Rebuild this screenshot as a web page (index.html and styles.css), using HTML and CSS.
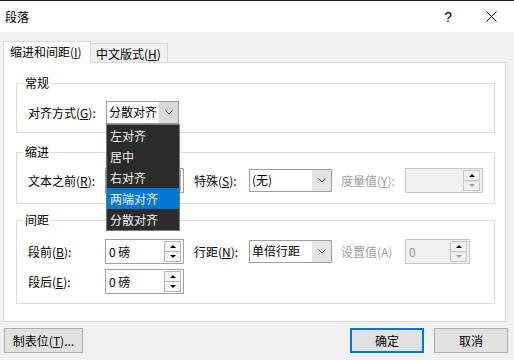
FILE: index.html
```html
<!DOCTYPE html>
<html lang="zh-CN">
<head>
    <meta charset="UTF-8">
    <title>段落</title>
    <link rel="stylesheet" href="styles.css">
</head>
<body>
    <div class="top-strip"></div>
    <div class="title-bar">
        <span class="title">段落</span>
        <span class="help">?</span>
        <span class="close">
            <svg width="11" height="11" viewBox="0 0 11 11"><path d="M0.5 0.5L10.5 10.5M10.5 0.5L0.5 10.5" stroke="#000" stroke-width="1"/></svg>
        </span>
    </div>

    <div class="tabs">
        <div class="tab active">缩进和间距(<u>I</u>)</div>
        <div class="tab">中文版式(<u>H</u>)</div>
    </div>

    <div class="panel">
        <fieldset class="group group-general">
            <legend>常规</legend>
            <div class="row">
                <span class="lbl lbl-first">对齐方式(<u>G</u>):</span>
                <div class="select select-align open">
                    <span class="value">分散对齐</span>
                    <span class="drop-btn">
                        <svg width="8" height="5" viewBox="0 0 8 5"><path d="M0.5 0.5L4 4L7.5 0.5" fill="none" stroke="#555"/></svg>
                    </span>
                    <ul class="drop-list">
                        <li>左对齐</li>
                        <li>居中</li>
                        <li>右对齐</li>
                        <li class="selected">两端对齐</li>
                        <li>分散对齐</li>
                    </ul>
                </div>
            </div>
        </fieldset>

        <fieldset class="group group-indent">
            <legend>缩进</legend>
            <div class="row">
                <span class="lbl lbl-first">文本之前(<u>R</u>):</span>
                <!-- covered by the open list above -->
                <div class="spin">
                    <span class="value"></span>
                    <span class="spin-btns">
                        <span class="spin-btn"><i class="arrow-up"></i></span>
                        <span class="spin-btn"><i class="arrow-down"></i></span>
                    </span>
                </div>
                <span class="lbl lbl-mid">特殊(<u>S</u>):</span>
                <div class="select select-mid">
                    <span class="value">(无)</span>
                    <span class="drop-btn">
                        <svg width="8" height="5" viewBox="0 0 8 5"><path d="M0.5 0.5L4 4L7.5 0.5" fill="none" stroke="#555"/></svg>
                    </span>
                </div>
                <span class="lbl lbl-last disabled">度量值(<u>Y</u>):</span>
                <div class="spin disabled spin-wide">
                    <span class="value"></span>
                    <span class="spin-btns">
                        <span class="spin-btn"><i class="arrow-up"></i></span>
                        <span class="spin-btn"><i class="arrow-down"></i></span>
                    </span>
                </div>
            </div>
        </fieldset>

        <fieldset class="group group-spacing">
            <legend>间距</legend>
            <div class="row">
                <span class="lbl lbl-first">段前(<u>B</u>):</span>
                <div class="spin">
                    <span class="value">0 磅</span>
                    <span class="spin-btns">
                        <span class="spin-btn"><i class="arrow-up"></i></span>
                        <span class="spin-btn"><i class="arrow-down"></i></span>
                    </span>
                </div>
                <span class="lbl lbl-mid">行距(<u>N</u>):</span>
                <div class="select select-mid">
                    <span class="value">单倍行距</span>
                    <span class="drop-btn">
                        <svg width="8" height="5" viewBox="0 0 8 5"><path d="M0.5 0.5L4 4L7.5 0.5" fill="none" stroke="#555"/></svg>
                    </span>
                </div>
                <span class="lbl lbl-last disabled">设置值(A)</span>
                <div class="spin disabled spin-short">
                    <span class="value">0</span>
                    <span class="spin-btns">
                        <span class="spin-btn"><i class="arrow-up"></i></span>
                        <span class="spin-btn"><i class="arrow-down"></i></span>
                    </span>
                </div>
            </div>
            <div class="row">
                <span class="lbl lbl-first">段后(<u>E</u>):</span>
                <div class="spin">
                    <span class="value">0 磅</span>
                    <span class="spin-btns">
                        <span class="spin-btn"><i class="arrow-up"></i></span>
                        <span class="spin-btn"><i class="arrow-down"></i></span>
                    </span>
                </div>
            </div>
        </fieldset>
    </div>

    <div class="buttons">
        <button class="btn btn-tabs">制表位(<u>T</u>)...</button>
        <button class="btn btn-ok">确定</button>
        <button class="btn">取消</button>
    </div>
</body>
</html>
```

FILE: styles.css
```css
body {
    margin: 0;
    width: 514px;
    height: 360px;
    overflow: hidden;
    background-color: #f0f0f0;
    font-family: "Noto Sans CJK SC", sans-serif;
    font-size: 12px;
    line-height: 16px;
    color: #000;
}

u {
    text-decoration: underline;
    text-underline-offset: 1px;
}

.top-strip {
    height: 1px;
    background-color: #1e1e1e;
}

.title-bar {
    height: 31px;
    background-color: #fff;
    display: flex;
    align-items: center;
    padding: 0 17px 0 5px;
}

.help {
    margin-left: auto;
    font-family: "Liberation Sans", sans-serif;
    font-size: 14px;
}

.close {
    display: flex;
    margin-left: 34px;
}

/* tabs */
.tabs {
    display: flex;
    align-items: flex-end;
    height: 21px;
    margin: 9px 0 0 3px;
}

.tab {
    box-sizing: border-box;
    height: 19px;
    width: 77px;
    padding: 2px 0 0 5px;
    border: 1px solid #d9d9d9;
    border-left: none;
    border-bottom: none;
    white-space: nowrap;
}

.tab.active {
    position: relative;
    z-index: 1;
    width: 88px;
    height: 22px;
    margin-bottom: -1px;
    padding: 2px 0 0 6px;
    border-left: 1px solid #d9d9d9;
    background-color: #fff;
}

.panel {
    box-sizing: border-box;
    width: 503px;
    height: 260px;
    margin-left: 3px;
    padding: 12px 0 0 12px;
    background-color: #fff;
    border: 1px solid #d9d9d9;
}

/* group boxes */
.group {
    box-sizing: border-box;
    width: 479px;
    margin: 0;
    padding: 0 0 0 11px;
    border: 1px solid #dcdcdc;
}

.group legend {
    padding: 0 2px;
    margin-left: -5px;
}

.group-general {
    height: 58px;
    padding-top: 10px;
}

.group-indent {
    height: 60px;
    margin-top: 11px;
    padding-top: 8px;
}

.group-spacing {
    height: 92px;
    margin-top: 8px;
    padding-top: 11px;
}

.row {
    display: flex;
    align-items: center;
}

.row + .row {
    margin-top: 5px;
}

.lbl {
    white-space: nowrap;
}

.lbl-first {
    width: 77px;
}

.lbl-mid {
    width: 55px;
    margin-left: 10px;
}

.lbl-last {
    width: 64px;
    margin-left: 9px;
}

.disabled {
    color: #a0a0a0;
}

/* combo boxes */
.select {
    position: relative;
    box-sizing: border-box;
    display: flex;
    height: 23px;
    border: 1px solid #a0a0a0;
    background-color: #fff;
}

.select .value {
    flex: 1;
    padding: 2px 0 0 2px;
    white-space: nowrap;
    overflow: hidden;
}

.drop-btn {
    width: 19px;
    display: flex;
    align-items: center;
    justify-content: center;
    background-color: #e5e5e5;
}

.select-align {
    width: 73px;
    margin-left: 1px;
    border-color: #9a9a9a;
}

.select-align .drop-btn {
    background-color: #dadada;
}

.select-mid {
    width: 83px;
}

.drop-list {
    position: absolute;
    z-index: 5;
    top: 22px;
    left: -1px;
    box-sizing: border-box;
    width: 74px;
    margin: 0;
    padding: 0;
    list-style: none;
    background-color: #2b2b2b;
    border: 1px solid #7a7a7a;
    color: #f2f2f2;
}

.drop-list li {
    height: 21px;
    line-height: 21px;
    padding-left: 3px;
    white-space: nowrap;
}

.drop-list li.selected {
    background-color: #0078d7;
}

/* spin boxes */
.spin {
    box-sizing: border-box;
    display: flex;
    width: 79px;
    height: 25px;
    padding: 1px;
    border: 1px solid #a0a0a0;
    background-color: #fff;
}

.spin .value {
    flex: 1;
    padding: 3px 0 0 2px;
    white-space: nowrap;
}

.spin-btns {
    display: flex;
    flex-direction: column;
    width: 17px;
    margin-right: 1px;
}

.spin-btn {
    flex: 1;
    display: flex;
    align-items: center;
    justify-content: center;
    border: 1px solid #b5b5b5;
    background-color: #f5f5f5;
}

.spin-btn + .spin-btn {
    border-top: none;
}

.arrow-up {
    border-left: 3px solid transparent;
    border-right: 3px solid transparent;
    border-bottom: 3px solid #000;
}

.arrow-down {
    border-left: 3px solid transparent;
    border-right: 3px solid transparent;
    border-top: 3px solid #000;
}

.spin.disabled {
    background-color: #f0f0f0;
    border-color: #c8c8c8;
}

.spin.disabled .spin-btn {
    border-color: #c8c8c8;
    background-color: #f0f0f0;
}

.spin.disabled .spin-btn + .spin-btn {
    border-top: 1px solid #e0e0e0;
}

.spin.disabled .arrow-down {
    border-top-color: #a0a0a0;
}

.spin-wide {
    width: 78px;
}

.spin-short {
    width: 65px;
}

/* bottom buttons */
.buttons {
    display: flex;
    margin-top: 6px;
    padding: 0 6px 0 4px;
}

.btn {
    box-sizing: border-box;
    width: 74px;
    height: 25px;
    padding: 0;
    font-family: inherit;
    font-size: 12px;
    background-color: #e1e1e1;
    border: 1px solid #adadad;
    color: #000;
}

.btn-tabs {
    width: 79px;
}

.btn-ok {
    margin-left: auto;
    margin-right: 10px;
    border: 2px solid #0078d7;
}
```
